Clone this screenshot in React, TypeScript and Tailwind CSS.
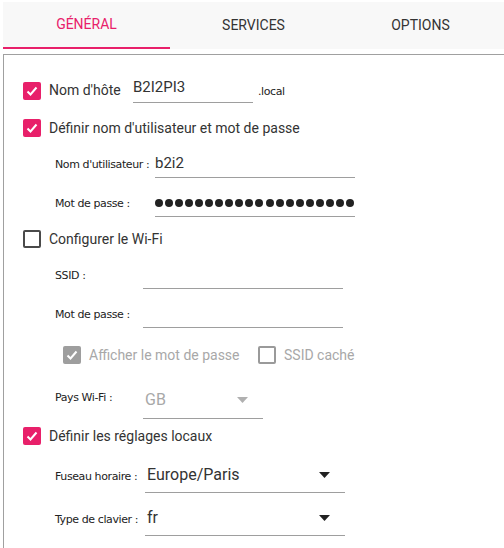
import React from "react";

const PINK = "bg-[#e8206a]";

function Check({ checked, disabled }: { checked?: boolean; disabled?: boolean }) {
  if (!checked) {
    return (
      <div
        className={`w-[18px] h-[18px] rounded-[2px] border-2 shrink-0 ${
          disabled ? "border-[#9a9a9a]" : "border-[#4a4a4a]"
        }`}
      />
    );
  }
  return (
    <div
      className={`w-[18px] h-[18px] rounded-[2px] shrink-0 flex items-center justify-center ${
        disabled ? "bg-[#9e9e9e]" : PINK
      }`}
    >
      <svg width="14" height="14" viewBox="0 0 14 14" fill="none">
        <polyline points="2.5,7.5 5.5,10.5 11.5,3.5" stroke="white" strokeWidth="2" />
      </svg>
    </div>
  );
}

function Arrow({ muted }: { muted?: boolean }) {
  return (
    <svg width="11" height="6" viewBox="0 0 11 6">
      <polygon points="0,0 11,0 5.5,6" fill={muted ? "#b0b0b0" : "#222"} />
    </svg>
  );
}

function CheckRow({ label, checked }: { label: string; checked?: boolean }) {
  return (
    <div className="flex items-center h-[24px] pl-[19px] gap-[8px]">
      <Check checked={checked} />
      <span className="text-[14px] text-[#333] whitespace-nowrap">{label}</span>
    </div>
  );
}

function Small({ children, w }: { children: React.ReactNode; w: string }) {
  return (
    <span className={`${w} shrink-0 whitespace-nowrap text-[11px] text-[#222] font-['DejaVu_Sans',sans-serif] tracking-[-0.4px]`}>
      {children}
    </span>
  );
}

export default function App() {
  const tabs = ["GÉNÉRAL", "SERVICES", "OPTIONS"];
  return (
    <div className="w-[504px] h-[548px] overflow-hidden bg-white font-['Roboto',sans-serif] pt-[2px] pl-[3px]">
      <div className="flex bg-[#f8f8f8] h-[47px]">
        {tabs.map((t, i) => (
          <div
            key={t}
            className={`flex-1 flex items-center justify-center text-[14px] ${
              i === 0 ? "text-[#e8206a] border-b-2 border-[#e8206a]" : "text-[#333]"
            }`}
          >
            {t}
          </div>
        ))}
      </div>

      <div className="mt-[5px] w-[540px] h-[520px] border border-[#a0a0a0] pt-[23px]">
        {/* hostname */}
        <div className="flex items-center h-[25px] pl-[19px]">
          <Check checked />
          <span className="ml-[8px] w-[84px] shrink-0 whitespace-nowrap text-[14px] text-[#333]">Nom d'hôte</span>
          <div className="w-[120px] h-[25px] border-b border-[#9e9e9e] flex items-center pb-[5px] text-[15px] text-[#333]">
            B2I2PI3
          </div>
          <span className="ml-[5px] self-end mb-[3px] text-[11px] text-[#222] font-['DejaVu_Sans',sans-serif] tracking-[-0.4px]">
            .local
          </span>
        </div>

        <div className="mt-[13px]">
          <CheckRow label="Définir nom d'utilisateur et mot de passe" checked />
        </div>

        <div className="mt-[13px] flex items-center h-[25px] pl-[51px]">
          <Small w="w-[100px]">Nom d'utilisateur :</Small>
          <div className="w-[200px] h-[25px] border-b border-[#9e9e9e] flex items-center pb-[3px] text-[15px] text-[#333]">
            b2i2
          </div>
        </div>

        <div className="mt-[14px] flex items-center h-[25px] pl-[51px]">
          <Small w="w-[100px]">Mot de passe :</Small>
          <div className="w-[200px] h-[25px] border-b border-[#9e9e9e] flex items-center justify-between pb-[2px] pr-[1px]">
            {Array.from({ length: 20 }).map((_, i) => (
              <span key={i} className="w-[8px] h-[8px] rounded-full bg-[#222]" />
            ))}
          </div>
        </div>

        <div className="mt-[10px]">
          <CheckRow label="Configurer le Wi-Fi" />
        </div>

        <div className="mt-[13px] flex items-center h-[25px] pl-[51px]">
          <Small w="w-[88px]">SSID :</Small>
          <div className="w-[200px] h-[25px] border-b border-[#9e9e9e]" />
        </div>

        <div className="mt-[14px] flex items-center h-[25px] pl-[51px]">
          <Small w="w-[88px]">Mot de passe :</Small>
          <div className="w-[200px] h-[25px] border-b border-[#9e9e9e]" />
        </div>

        <div className="mt-[15px] flex items-center h-[24px] pl-[59px]">
          <Check checked disabled />
          <span className="ml-[8px] w-[169px] shrink-0 whitespace-nowrap text-[14px] text-[#a8a8a8]">Afficher le mot de passe</span>
          <Check disabled />
          <span className="ml-[8px] whitespace-nowrap text-[14px] text-[#a8a8a8]">SSID caché</span>
        </div>

        <div className="mt-[18px] flex items-center h-[31px] pl-[51px] pb-[5px]">
          <Small w="w-[88px]">Pays Wi-Fi :</Small>
          <div className="w-[120px] h-[31px] border-b border-[#9e9e9e] flex items-center justify-between pl-[2px] pr-[15px] pb-[5px] mb-[-10px] text-[16px] text-[#a8a8a8]">
            GB
            <Arrow muted />
          </div>
        </div>

        <div className="mt-[8px]">
          <CheckRow label="Définir les réglages locaux" checked />
        </div>

        <div className="mt-[14px] flex items-center h-[31px] pl-[51px]">
          <Small w="w-[90px]">Fuseau horaire :</Small>
          <div className="w-[200px] h-[31px] border-b border-[#9e9e9e] flex items-center justify-between pl-[2px] pr-[15px] pb-[5px] text-[16px] text-[#333]">
            Europe/Paris
            <Arrow />
          </div>
        </div>

        <div className="mt-[12px] flex items-center h-[31px] pl-[51px]">
          <Small w="w-[90px]">Type de clavier :</Small>
          <div className="w-[200px] h-[31px] border-b border-[#9e9e9e] flex items-center justify-between pl-[2px] pr-[15px] pb-[5px] text-[16px] text-[#333]">
            fr
            <Arrow />
          </div>
        </div>
      </div>
    </div>
  );
}
